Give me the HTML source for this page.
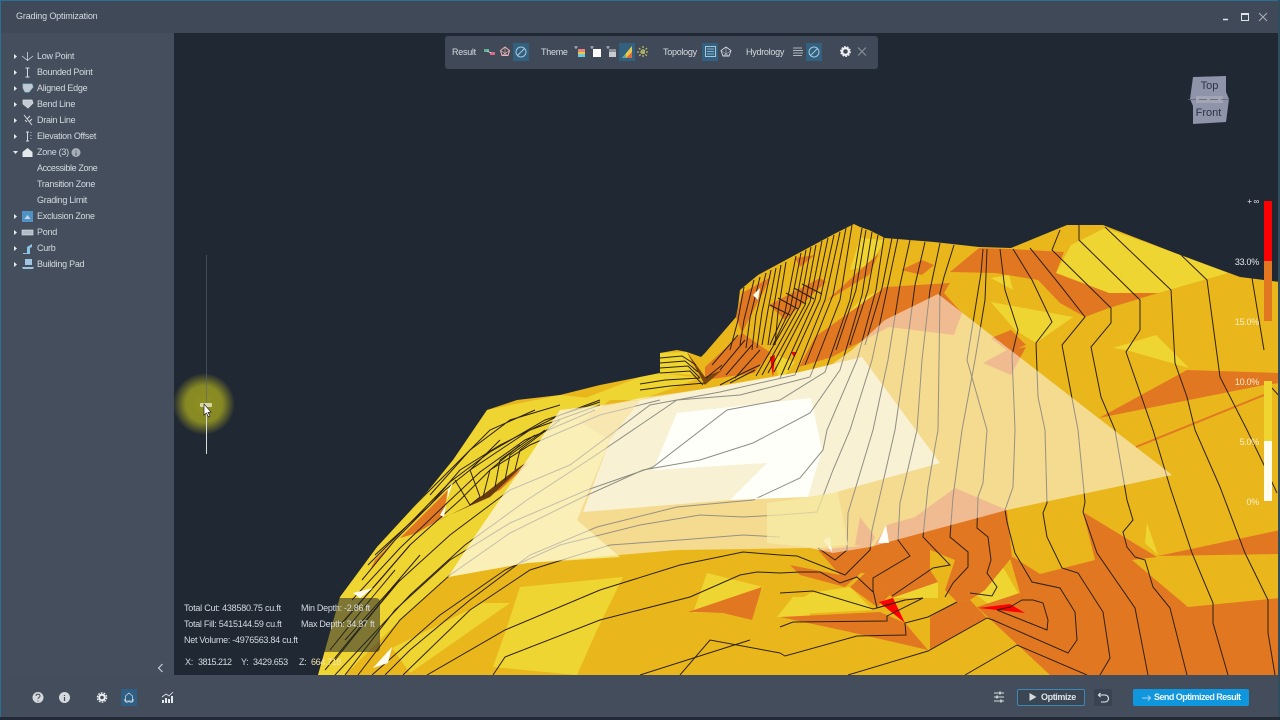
<!DOCTYPE html>
<html><head><meta charset="utf-8"><title>Grading Optimization</title>
<style>
html,body{margin:0;padding:0;width:1280px;height:720px;overflow:hidden;background:#434d5b}
body{position:relative;font-family:"Liberation Sans",sans-serif;font-size:9px;color:#d5dae0}
.a{position:absolute;white-space:nowrap;line-height:12px;letter-spacing:-.27px}
.box{position:absolute}
svg{position:absolute;overflow:visible}
</style></head><body>
<!-- window bars -->
<div class="box" style="left:0;top:0;width:1280px;height:33px;background:#3f4957"></div>
<div class="box" style="left:0;top:0;width:1280px;height:1px;background:#2c6f95"></div>
<div class="box" style="left:0;top:0;width:1px;height:720px;background:#2c6f95"></div>
<div class="box" style="left:1px;top:33px;width:173px;height:642px;background:#444e5c"></div>
<div class="box" style="left:174px;top:33px;width:1104px;height:642px;background:#202833"></div>
<div class="box" style="left:1278px;top:0;width:2px;height:720px;background:#2f4d5c"></div>
<div class="box" style="left:1px;top:675px;width:1277px;height:42px;background:#434d5b"></div>
<div class="box" style="left:0;top:717px;width:1280px;height:3px;background:#222a35"></div>

<!-- terrain -->
<svg width="1280" height="720" viewBox="0 0 1280 720" style="left:0;top:0">
<defs>
<filter id="soft" x="0" y="0" width="100%" height="100%"><feGaussianBlur stdDeviation=".25"/></filter>
<clipPath id="view"><rect x="174" y="33" width="1104" height="642"/></clipPath>
<clipPath id="terr"><polygon id="tp" points="318,675 340,597 377,547 423,497 453,460 487,410 517,400 560,395 600,385 640,377 660,373 660,353 677,350 687,352 701,357 705,353 736,317 738,307 740,290 758,275 795,255 836,233 854,224 860,227 869,230 885,238 934,242 979,247 1011,248 1067,225 1103,225 1175,253 1240,277 1264,280 1280,282 1280,675"/></clipPath>
<clipPath id="inner"><polygon points="583,512 767,497 808,497 833,493 940,463 862,357 800,372 640,400 610,440"/></clipPath>
<g id="c" fill="none">
<!-- right -->
<polyline points="1000,249 1005,290 1018,330 1012,355 1015,430 1013,487 1005,510 1007,522 1015,553 1032,582 1060,588 1075,612 1077,640 1068,653 993,620 987,618 928,651 848,675"/>
<polyline points="1013,249 1032,280 1052,322 1036,343 1038,397 1045,430 1047,503 1043,513 1047,537 1062,568 1078,573 1103,612 1110,658 1100,675"/>
<polyline points="1030,248 1060,285 1085,317 1062,345 1078,430 1085,502 1083,512 1097,553 1135,608 1148,675"/>
<polyline points="1060,230 1052,250 1111,308 1111,323 1091,347 1101,397 1115,430 1127,500 1133,520 1123,532 1127,547 1135,557 1145,560 1153,587 1170,608 1187,675"/>
<polyline points="1079,225 1079,240 1140,300 1140,330 1126,352 1153,430 1170,487 1192,553 1213,603 1213,623 1228,675"/>
<polyline points="1105,227 1171,290 1175,363 1187,397 1195,430 1220,487 1245,553 1268,600 1268,633 1275,675"/>
<polyline points="1179,253 1207,280 1220,377 1247,430 1263,463 1277,493"/>
<polyline points="1252,278 1264,350"/><polyline points="1272,388 1280,397"/>
<polyline points="987,249 985,300 975,360 962,430 953,497 950,537 968,552 968,567 953,583 945,597"/>
<polyline points="983,249 981,273 967,360 987,430 983,483 978,497 977,528 988,537 991,560 987,573 997,587 992,596 970,593"/>
<polyline points="954,245 944,277 940,293 938,430 928,487 923,537 950,565 933,568 892,596"/>
<polyline points="940,243 930,290 922,360 917,430 900,503 898,540 910,556 873,578 873,590 877,608 905,600 923,598"/>
<polyline points="925,242 915,285 905,360 895,430 872,530 870,550 845,575 797,556 780,555 743,552 680,565 600,590 505,630 427,675"/>
<polyline points="910,240 900,285 888,360 873,430 848,513 847,550 835,560 818,548"/>
<polyline points="898,238 888,285 872,360 850,430 833,470 817,512 780,515 743,517 700,515 640,525 560,545 505,570 440,615 372,675"/>
<polyline points="884,237 876,290 857,360 827,430 823,450 800,478 753,500 677,507 597,527 530,555 470,600 410,650 385,675"/>
<polyline points="780,537 743,535 680,540 610,545 530,570 470,610 403,675"/>
<polyline points="872,232 862,295 840,370 810,413 753,443 700,460 643,470 583,497 510,533 450,575 400,620 358,675"/>
<polyline points="862,228 850,300 825,372 780,400 727,410 653,467 587,490 510,523 450,560 395,610 345,675"/>
<polyline points="852,225 840,300 810,377 740,395 677,400 593,457 527,500 465,545 410,595 335,675"/>
<polyline points="840,232 825,300 795,375 720,392 650,405 570,465 510,490 450,535 395,585 325,670"/>
<!-- lower -->
<polyline points="780,573 757,572 740,575 690,597 600,620 505,657 493,675"/>
<polyline points="820,572 840,583 857,577 873,592"/><polyline points="780,573 800,572 820,572"/>
<polyline points="780,593 813,591 873,609 905,600"/>
<polyline points="780,627 793,622 887,621 887,616 923,598"/>
<polyline points="780,653 785,656 857,636 906,635 905,623 928,617 957,602"/>
<polyline points="780,653 710,640 680,675"/><polyline points="750,640 640,675"/>
<polyline points="965,675 1017,645 1087,675"/>
<polyline points="997,610 1047,630 1048,620 1043,603 1033,600 1022,600 1010,607 997,610"/>
<!-- hillside -->
<polyline points="892,238 882,288 865,345"/><polyline points="878,235 868,290 850,345"/><polyline points="866,230 856,290 836,350"/>
<polyline points="846,228 833,295 805,365"/><polyline points="834,235 820,300 788,370"/>
<polyline points="828,238 815,300 780,378"/><polyline points="822,241 810,302 774,372"/><polyline points="816,245 805,305 768,373"/>
<polyline points="811,247 800,306 762,375"/><polyline points="806,250 795,308 756,376"/><polyline points="801,253 790,310 773,345"/><polyline points="796,256 785,312 770,345"/><polyline points="786,262 778,312 775,345"/>
<polyline points="781,265 773,311 768,345"/><polyline points="776,268 768,310 762,345"/><polyline points="771,270 762,312 757,348"/><polyline points="766,273 756,315 752,350"/><polyline points="760,277 750,318 746,348"/><polyline points="754,280 744,320 740,345"/>
<polyline points="744,287 738,320 730,350"/>
<polyline points="738,335 712,365"/><polyline points="745,340 720,370"/><polyline points="752,345 726,375"/><polyline points="760,350 735,378"/>
<polyline points="770,305 790,315"/><polyline points="778,298 798,309"/><polyline points="786,293 806,304"/><polyline points="794,288 814,299"/><polyline points="802,284 822,294"/>
<polyline points="660,358 682,356 696,365"/><polyline points="660,363 685,361 698,372"/><polyline points="660,368 688,366 700,378"/><polyline points="660,373 690,371 703,385"/>
<polyline points="640,384 665,380 700,378"/><polyline points="640,390 670,386 705,383"/>
<polyline points="720,385 745,372 760,365"/><polyline points="730,383 755,370"/><polyline points="706,378 722,365"/>
<!-- left -->
<polyline points="345,620 410,545 460,500 490,470 530,445 600,415 660,400"/>
<polyline points="352,600 400,548 445,505 480,472 525,440 595,410"/>
<polyline points="362,580 395,540 445,490 470,470 530,430 600,405"/>
<polyline points="368,565 415,518 450,482 490,452 545,420 600,402"/>
<polyline points="375,555 430,505 460,470 500,445 560,415 600,400"/>
<polyline points="400,520 450,470 490,430 535,410"/>
<polyline points="430,495 470,450 510,420 560,405"/>
<polyline points="455,480 470,505 480,497 470,470 500,440"/>
<polyline points="483,497 490,470 520,445"/><polyline points="495,487 500,460 535,435"/><polyline points="505,480 510,455 545,430"/>
<polyline points="515,470 520,450 560,420"/>
<polyline points="345,640 390,590 420,555"/><polyline points="335,660 375,610 400,580"/>
<polyline points="340,625 380,580 410,545"/><polyline points="330,650 370,600 395,570"/>
</g>
</defs>
<g clip-path="url(#view)"><g filter="url(#soft)"><g clip-path="url(#terr)">
<rect x="300" y="200" width="990" height="480" fill="#e9b71f"/>
<g fill="#efd530">
<polygon points="318,675 340,597 377,547 423,497 453,460 487,410 560,395 610,400 527,460 448,577 400,620 345,675"/>
<polygon points="448,577 527,563 620,557 577,520 610,440 560,410 527,460 477,533"/>
<polygon points="392,648 483,603 510,603 410,673"/>
<polygon points="520,587 623,577 597,630 577,675 493,667 507,627"/>
<polygon points="693,613 707,573 763,587 750,613"/>
<polygon points="777,617 793,597 810,597 810,617"/>
<polygon points="580,400 640,377 660,373 700,378 640,400"/>
<polygon points="660,353 687,352 695,375 660,373"/>
<polygon points="1056,273 1071,245 1105,228 1175,253 1228,273 1158,293 1109,293"/>
<polygon points="991,302 1073,317 1036,343 1015,330"/>
<polygon points="1113,348 1156,335 1189,368 1126,350"/>
<polygon points="991,278 1009,275 1013,290"/>
<polygon points="860,238 885,240 870,265 850,270"/>
<polygon points="820,345 860,300 890,285 860,320 825,360"/>
<polygon points="775,355 795,362 785,375 778,377"/>
<polygon points="780,615 810,593 850,587 873,610"/>
<polygon points="955,560 990,545 1018,593 990,605 970,590"/>
<polygon points="865,573 870,552 890,543 888,558"/>
<polygon points="892,598 938,582 938,598"/>
<polygon points="1145,543 1147,523 1158,555"/>
</g>
<g fill="#e27722">
<polygon points="1013,557 1040,574 1095,560 1083,512 1157,557 1132,560 1188,607 1280,598 1280,675 1050,675 977,607 1020,593 1010,558"/>
<polygon points="1158,556 1280,530 1280,554"/>
<polygon points="873,547 887,525 915,517 955,488 1007,510 1012,557 985,590 970,600 957,602 945,590 955,560 930,550 930,570 938,582 892,598 890,595 865,573 855,573 870,545"/>
<polygon points="780,617 880,612 905,623 928,650 850,632"/>
<polygon points="930,650 930,617 957,602 970,600 987,618"/>
<polygon points="790,565 840,575 863,571 845,587 800,575"/>
<polygon points="818,550 870,545 855,573 840,575"/>
<polygon points="850,587 865,573 890,595 877,607"/>
<polygon points="688,612 762,587 752,620 723,613"/>
<polygon points="950,272 979,248 1011,249 1064,252 1056,273 1109,293 1158,293 1109,308 1085,317 1060,303 1038,280 995,273"/>
<polygon points="991,338 1011,330 1026,345 1009,352"/>
<polygon points="983,363 1007,350 1026,347 1011,375"/>
<polygon points="1099,418 1187,370 1280,373 1280,383 1264,385"/>
<polygon points="799,367 815,337 885,287 950,283 944,293 962,313 954,335 889,327 832,357"/>
<polygon points="824,303 879,253 869,275 828,300"/>
<polygon points="901,270 922,260 934,265 922,275"/>
<polygon points="705,367 742,333 771,353 754,373 705,380"/>
<polygon points="736,317 742,293 771,277 742,333"/>
<polygon points="769,305 820,278 826,282 785,320"/>
<polygon points="795,258 815,255 800,267"/>
<polygon points="400,538 428,510 448,490 443,517 417,533"/>
<polygon points="370,570 395,540 375,560"/>
<polygon points="525,465 530,462 500,490 490,495"/>
</g>
<polyline points="1136,447 1264,395" fill="none" stroke="#e27722" stroke-width="2"/>
<polygon points="425,527 470,505 515,470 527,462 490,497 445,517" fill="#6b3a0c"/>
<polygon points="687,352 705,385 722,370 705,377" fill="#7a450d"/>
<polygon points="860,517 875,537 870,547 855,545" fill="#e27722"/>
<g fill="#fe0000">
<polygon points="879,602 893,598 905,623 895,615"/>
<polygon points="978,608 1010,604 1025,613 997,610"/>
<polygon points="770,357 775,355 773,377"/>
<polygon points="791,352 797,352 794,357"/>
</g>
<use href="#c" stroke="#2e2008" stroke-width="1"/>
<g fill="#fffdf0">
<polygon points="353,593 373,588 360,598"/>
<polygon points="373,668 392,647 388,663"/>
<polygon points="448,490 453,482 447,500"/>
<polygon points="440,515 446,505 444,517"/>
<polygon points="753,295 760,288 758,300"/>
<polygon points="823,540 830,537 832,552"/>
<polygon points="878,543 886,525 889,543"/>
</g>
<!-- pad overlay -->
<polygon points="448,577 527,563 677,550 810,548 833,553 870,547 1007,510 1172,475 938,294 885,320 852,350 824,370 770,380 640,398 610,405 560,410 527,460 477,533" fill="#fff" fill-opacity=".5"/>
<polygon points="448,577 527,563 620,557 577,520 610,440 640,400 560,410 527,460 477,533" fill="#fdf6dc" fill-opacity=".45"/>
<polygon points="767,503 810,497 838,492 848,545 815,548 767,543" fill="#f6eca8" fill-opacity=".7"/>
<polygon points="583,512 767,497 808,497 833,493 940,463 862,357 800,372 640,400 610,440" fill="#f9f1d4"/>
<polygon points="653,470 677,413 811,398 822,450 808,497 730,500 767,463" fill="#fffffa"/>
<use href="#c" stroke="#8f8e84" stroke-width="1" clip-path="url(#inner)"/>
</g></g>

<!-- color bar -->
<rect x="1264" y="201" width="8" height="60" fill="#fe0000"/>
<rect x="1264" y="261" width="8" height="60" fill="#e27722"/>
<rect x="1264" y="381" width="8" height="60" fill="#efd530"/>
<rect x="1264" y="441" width="8" height="60" fill="#fffdf0"/>

<!-- cursor glow -->
<defs><radialGradient id="gl"><stop offset="0" stop-color="#8f9020"/><stop offset=".6" stop-color="#868824"/><stop offset="1" stop-color="#868824" stop-opacity="0"/></radialGradient></defs>
<circle cx="204" cy="404" r="31" fill="url(#gl)"/>
<line x1="206.500" y1="255" x2="206.500" y2="404" stroke="#5d6570" stroke-width="1" opacity=".6"/>
<line x1="206.500" y1="410" x2="206.500" y2="454" stroke="#d8dcdc" stroke-width="1"/>
<rect x="200" y="403" width="12" height="4" rx="1" fill="#d6d8a8"/>
<polygon points="204,404 204,415 206.500,413 208.500,417 210,416 208,412.500 211,412" fill="#fff" stroke="#222" stroke-width=".7"/>

<!-- info overlay -->
<path d="M174 598H376a4 4 0 0 1 4 4V648a4 4 0 0 1 -4 4H174Z" fill="#202833" fill-opacity=".55"/>

<!-- nav cube -->
<polygon points="1193,77 1226,76 1226,92 1229,99 1226,122 1193,124 1193,106 1190,99" fill="#8f94aa"/>
<rect x="1196" y="96" width="27" height="7" fill="#a2a6b4"/>
<line x1="1188" y1="99.500" x2="1231" y2="99.500" stroke="#596173" stroke-dasharray="8 3" stroke-width=".7"/>
</g>
</svg>

<!-- title -->
<div class="a" style="left:16px;top:10px;letter-spacing:-.15px">Grading Optimization</div>
<svg width="60" height="20" style="left:1220px;top:8px" fill="none" stroke="#dfe3e8">
<line x1="3" y1="11.500" x2="8" y2="11.500" stroke-width="1.500"/>
<rect x="21.500" y="5.500" width="7" height="7"/><line x1="21" y1="6.500" x2="29" y2="6.500"/>
<path d="M39 5l8 8M47 5l-8 8" stroke="#aab1ba"/>
</svg>

<!-- tree -->
<div class="a" style="left:37px;top:50px">Low Point</div>
<div class="a" style="left:37px;top:66px">Bounded Point</div>
<div class="a" style="left:37px;top:82px">Aligned Edge</div>
<div class="a" style="left:37px;top:98px">Bend Line</div>
<div class="a" style="left:37px;top:114px">Drain Line</div>
<div class="a" style="left:37px;top:130px">Elevation Offset</div>
<div class="a" style="left:37px;top:146px">Zone (3)</div>
<div class="a" style="left:37px;top:162px;letter-spacing:-.38px">Accessible Zone</div>
<div class="a" style="left:37px;top:178px">Transition Zone</div>
<div class="a" style="left:37px;top:194px">Grading Limit</div>
<div class="a" style="left:37px;top:210px">Exclusion Zone</div>
<div class="a" style="left:37px;top:226px">Pond</div>
<div class="a" style="left:37px;top:242px">Curb</div>
<div class="a" style="left:37px;top:258px">Building Pad</div>
<svg width="60" height="280" style="left:0;top:0" fill="none" stroke="#d5dae0">
<g fill="#e5e8ec" stroke="none">
<path d="M14 54l3 2.500-3 2.500z"/><path d="M14 70l3 2.500-3 2.500z"/><path d="M14 86l3 2.500-3 2.500z"/><path d="M14 102l3 2.500-3 2.500z"/><path d="M14 118l3 2.500-3 2.500z"/><path d="M14 134l3 2.500-3 2.500z"/>
<path d="M13 151h5l-2.500 3z"/>
<path d="M14 214l3 2.500-3 2.500z"/><path d="M14 230l3 2.500-3 2.500z"/><path d="M14 246l3 2.500-3 2.500z"/><path d="M14 262l3 2.500-3 2.500z"/>
</g>
<path d="M27.500 52v8M22 56l5.500 4.500L33 56M25 58.500l2.500 2 2.500-2" stroke-width=".8"/>
<path d="M27.500 68.500v8M25.500 68h4M25.500 77h4" stroke-width="1"/>
<path d="M23 84h9l1 3-4 5h-4l-2-4z" fill="#c4cad2" stroke="#8fc3e0" stroke-width=".7"/>
<path d="M23 100h9l1 3-5 5-5-4z" fill="#c4cad2" stroke="#e0e4e8" stroke-width=".7"/>
<path d="M24 115l8 10M30 116l-3 3M32 119l-3 3M25 120l2 2" stroke-width="1"/>
<path d="M26 132h3M27.500 132v9M26 141h3" stroke-width="1"/><path d="M31 132v9" stroke-dasharray="1 2" stroke-width=".8"/>
<path d="M22.500 157v-5l5-4 5 4v5z" fill="#e6e9ec" stroke="none"/>
<circle cx="76" cy="152.500" r="4.500" fill="#a7aeb7" stroke="none"/>
<path d="M76 150.500v1M76 152.500v3" stroke="#434d5b"/>
<rect x="22" y="211" width="11" height="11" fill="#4f93c6" stroke="none"/><path d="M24.500 219l3-4 3 4z" fill="#c8d6e2" stroke="none"/>
<rect x="22" y="230" width="11" height="5" fill="#aebcc8" stroke="#dfe3e8" stroke-width=".6"/>
<path d="M23 253h4v-6l5-3v3l-2 1v6h-7z" fill="#8cc4e6" stroke="none"/>
<path d="M25 259h7v6h-7zM22 267h12l-1 2h-10z" fill="#9fc6e0" stroke="none"/>
</svg>

<!-- collapse -->
<svg width="10" height="12" style="left:156px;top:662px" fill="none" stroke="#c9ced5" stroke-width="1.200"><path d="M6.500 2L2.500 6l4 4"/></svg>

<!-- toolbar -->
<div class="box" style="left:445px;top:36px;width:433px;height:33px;background:#3f4957;border-radius:3px"></div>
<div class="a" style="left:452px;top:46px">Result</div>
<div class="a" style="left:541px;top:46px">Theme</div>
<div class="a" style="left:663px;top:46px">Topology</div>
<div class="a" style="left:746px;top:46px">Hydrology</div>
<div class="box" style="left:513px;top:43px;width:16px;height:18px;background:#32607f"></div>
<div class="box" style="left:619px;top:43px;width:16px;height:18px;background:#32607f"></div>
<div class="box" style="left:702px;top:43px;width:16px;height:18px;background:#32607f"></div>
<div class="box" style="left:806px;top:43px;width:16px;height:18px;background:#32607f"></div>
<svg width="440" height="40" style="left:440px;top:30px" fill="none" stroke="#d5dae0">
<rect x="44" y="19" width="5" height="3" fill="#5fb08e" stroke="none"/><rect x="50" y="22" width="5" height="3" fill="#d96a8a" stroke="none"/><path d="M47 21l4 2" stroke-width=".7"/>
<path d="M65 17l4.500 3.500-1.500 5h-6l-1.500-5z" stroke="#eeb4b4" stroke-width="1"/><path d="M65 17v8M60.500 20.500l7.500 5M69.500 20.500l-7.500 5" stroke="#eeb4b4" stroke-width=".6"/>
<circle cx="81" cy="22" r="5" stroke="#a9c6dc"/><path d="M77.500 25.500l7-7" stroke="#a9c6dc"/>
<path d="M136 19v-3M134.500 17h3" stroke-width=".8"/>
<rect x="138" y="19" width="7" height="8" fill="#e9c94b" stroke="none"/><rect x="138" y="19" width="7" height="3" fill="#e8857a" stroke="none"/><rect x="138" y="24" width="7" height="3" fill="#6fc7d8" stroke="none"/>
<path d="M152 19v-3M150.500 17h3" stroke-width=".8"/><rect x="153" y="19" width="8" height="8" fill="#fff" stroke="none"/>
<path d="M168 19v-3M166.500 17h3" stroke-width=".8"/><rect x="169" y="19" width="7" height="8" fill="#c8ccd0" stroke="none"/><rect x="169" y="19" width="7" height="3" fill="#8b9096" stroke="none"/>
<polygon points="182,28 192,28 192,16" fill="#e9c94b" stroke="none"/><polygon points="186,28 192,28 192,22" fill="#d96b3a" stroke="none"/><polygon points="182,28 186,24 186,28" fill="#5fb08e" stroke="none"/>
<path d="M203 16v12M197 22h12M199 18l8 8M207 18l-8 8" stroke="#b8b86a" stroke-width="1.300" stroke-dasharray="2 1"/>
<rect x="265.500" y="16.500" width="10" height="10" stroke="#a9c6dc"/><path d="M267 19h7M267 21.500h7M267 24h7" stroke="#a9c6dc" stroke-width=".8"/>
<path d="M286 17l5 3.500-2 5.500h-6l-2-5.500z" stroke-width=".9"/><path d="M286 17v9M281 20.500l8 5.500M291 20.500l-8 5.500" stroke-width=".5"/>
<path d="M353 18h9M353 20.500h10M353 23h10M353 25.500h9" stroke-width=".8"/>
<circle cx="374" cy="22" r="5" stroke="#a9c6dc"/><path d="M370.500 25.500l7-7" stroke="#a9c6dc"/>
<circle cx="405.500" cy="21.500" r="3.400" stroke="#eef0f2" stroke-width="2.200"/><circle cx="405.500" cy="21.500" r="4.800" stroke="#eef0f2" stroke-width="1.300" stroke-dasharray="1.700 1.300"/>
<path d="M418 17.500l8 8M426 17.500l-8 8" stroke="#8d949d"/>
</svg>

<!-- nav cube labels -->
<div class="a" style="left:1190px;top:80px;width:39px;text-align:center;font-size:11px;color:#2b3444;letter-spacing:0">Top</div>
<div class="a" style="left:1189px;top:107px;width:39px;text-align:center;font-size:11px;color:#2b3444;letter-spacing:0">Front</div>

<!-- scale labels -->
<div class="a" style="left:1240px;top:196px;width:19px;text-align:right;color:#e6e8ea;font-size:8px">+ ∞</div>
<div class="a" style="left:1228px;top:256px;width:31px;text-align:right;color:#e6e8ea">33.0%</div>
<div class="a" style="left:1228px;top:316px;width:31px;text-align:right;color:#fbeec8">15.0%</div>
<div class="a" style="left:1228px;top:376px;width:31px;text-align:right;color:#fbeec8">10.0%</div>
<div class="a" style="left:1228px;top:436px;width:31px;text-align:right;color:#fbeec8">5.0%</div>
<div class="a" style="left:1228px;top:496px;width:31px;text-align:right;color:#fbeec8">0%</div>

<!-- stats -->
<div class="a" style="left:184px;top:602px;letter-spacing:-.22px">Total Cut: 438580.75 cu.ft</div>
<div class="a" style="left:184px;top:618px">Total Fill: 5415144.59 cu.ft</div>
<div class="a" style="left:184px;top:634px">Net Volume: -4976563.84 cu.ft</div>
<div class="a" style="left:301px;top:602px">Min Depth: -2.86 ft</div>
<div class="a" style="left:301px;top:618px">Max Depth: 34.87 ft</div>
<div class="a" style="left:185px;top:656px">X:</div>
<div class="a" style="left:198px;top:656px;letter-spacing:-.5px">3815.212</div>
<div class="a" style="left:241px;top:656px">Y:</div>
<div class="a" style="left:253px;top:656px;letter-spacing:-.35px">3429.653</div>
<div class="a" style="left:299px;top:656px">Z:</div>
<div class="a" style="left:311px;top:656px;color:#f0e2b0;letter-spacing:-.35px">664.718</div>

<!-- bottom left icons -->
<div class="box" style="left:121px;top:689px;width:16px;height:17px;background:#2f5f85"></div>
<svg width="180" height="30" style="left:20px;top:683px" fill="none">
<circle cx="18" cy="14.500" r="5.500" fill="#d5d8dc"/><path d="M16 13c0-2.500 4-2.500 4 0 0 1.500-2 1.500-2 3M18 17.500v1" stroke="#434d5b" stroke-width="1"/>
<circle cx="44.500" cy="14.500" r="5.500" fill="#d5d8dc"/><path d="M44.500 12v1M44.500 14v4" stroke="#434d5b" stroke-width="1.200"/>
<circle cx="82" cy="14.500" r="2.800" stroke="#eef0f2" stroke-width="2"/><circle cx="82" cy="14.500" r="4.600" stroke="#eef0f2" stroke-width="1.400" stroke-dasharray="1.700 1.200"/>
<path d="M109 10l3.500 3v5h-7v-5zM105 16a2 2 0 1 0 4 2M109 18a2 2 0 1 0 4-2" stroke="#cfd8e0" stroke-width=".8"/>
<path d="M143 20v-3M146 20v-5M149 20v-4M152 20v-7" stroke="#e6e9ec" stroke-width="2"/><path d="M142 14l4-3 3 2 4-4" stroke="#e6e9ec" stroke-width=".8"/>
</svg>

<!-- bottom right -->
<svg width="14" height="14" style="left:992px;top:690px" fill="none" stroke="#d5dae0"><path d="M2 3h10M2 7h10M2 11h10"/><path d="M8 1.500v3M5 5.500v3M9 9.500v3" stroke-width="1.500"/></svg>
<div class="box" style="left:1017px;top:689px;width:66px;height:15px;border:1px solid #3f86b4;border-radius:2px;background:#3a4654"></div>
<svg width="10" height="10" style="left:1029px;top:692px"><path d="M0.500 1l7 4-7 4z" fill="#d5dae0"/></svg>
<div class="a" style="left:1041px;top:691px;font-weight:bold;color:#dfe3e8;letter-spacing:-.4px">Optimize</div>
<div class="box" style="left:1094px;top:689px;width:18px;height:17px;background:#394453;border-radius:2px"></div>
<svg width="14" height="14" style="left:1097px;top:691px" fill="none" stroke="#e3e6ea" stroke-width="1.100"><path d="M3.500 2L1.500 4l2 2M2 4h6a3 3 0 0 1 0 7H4"/></svg>
<div class="box" style="left:1133px;top:689px;width:116px;height:17px;background:#0f96dc;border-radius:2px"></div>
<svg width="12" height="8" style="left:1141px;top:694px" fill="none" stroke="#a7d6f0"><path d="M1 4h8M7 1.500L9.500 4 7 6.500"/></svg>
<div class="a" style="left:1154px;top:691px;font-weight:bold;color:#eef6fb;letter-spacing:-.55px">Send Optimized Result</div>
</body></html>
